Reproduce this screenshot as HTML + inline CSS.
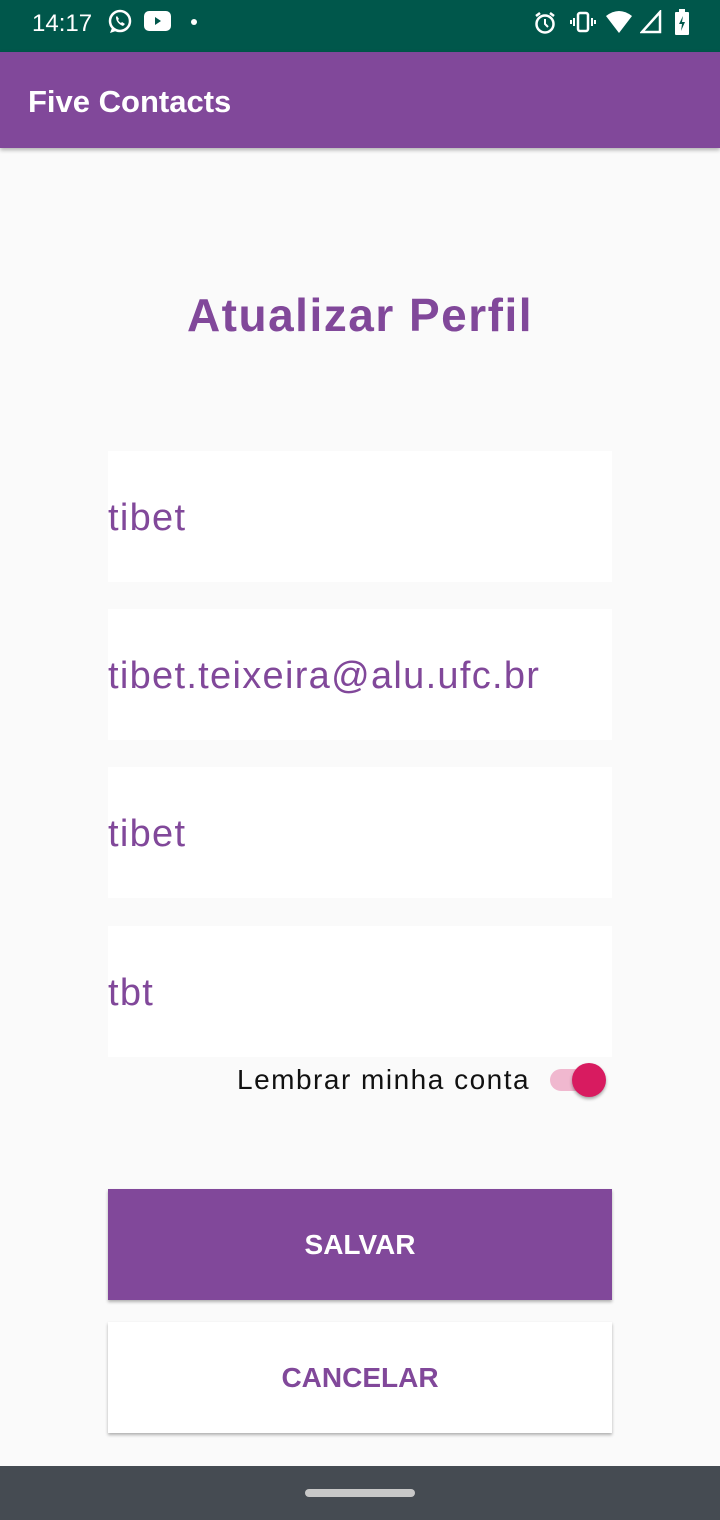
<!DOCTYPE html>
<html><head><meta charset="utf-8"><style>
*{margin:0;padding:0;box-sizing:border-box}
body{width:720px;height:1520px;position:relative;background:#fafafa;font-family:"Liberation Sans",Roboto,sans-serif;overflow:hidden}
.sb{position:absolute;top:0;left:0;width:720px;height:52px;background:#00574b;color:#fff}
.ab{position:absolute;top:52px;left:0;width:720px;height:96px;background:#81489a;box-shadow:0 2px 4px rgba(0,0,0,.3)}
.ab span{position:absolute;left:28px;top:32px;color:#fff;font-size:31px;font-weight:bold}
h1{position:absolute;top:288px;left:0;width:720px;text-align:center;font-size:46px;color:#81489a;letter-spacing:1.5px}
.f{position:absolute;left:108px;width:504px;height:131px;background:#fff;color:#81489a;font-size:38px;padding-top:46px;letter-spacing:1.3px}
.btn{position:absolute;left:108px;width:504px;height:111px;text-align:center;line-height:111px;font-weight:bold;font-size:28px;box-shadow:0 2px 3px rgba(0,0,0,.3)}
.nav{position:absolute;top:1466px;left:0;width:720px;height:54px;background:#454b52}
</style></head><body>
<div class="sb">
<span style="position:absolute;left:32px;top:10px;font-size:24px">14:17</span>
<svg style="position:absolute;left:107px;top:9px" width="26" height="26" viewBox="0 0 26 26"><circle cx="13" cy="12" r="10" fill="none" stroke="#fff" stroke-width="2.5"/><path d="M5 19 L3 24 L9 22Z" fill="#fff"/><path d="M9 8 q0 6 7 9 l2-2 -3-2 -1 1 q-2-1-3-3 l1-1 -2-3z" fill="#fff"/></svg>
<svg style="position:absolute;left:144px;top:11px" width="27" height="20"><rect width="27" height="20" rx="5" fill="#fff"/><path d="M11 6 L17 10 L11 14Z" fill="#00574b"/></svg>
<div style="position:absolute;left:191px;top:19px;width:6px;height:6px;border-radius:3px;background:#fff"></div>
<svg style="position:absolute;left:532px;top:10px" width="26" height="26"><circle cx="13" cy="14" r="8.5" fill="none" stroke="#fff" stroke-width="2.5"/><path d="M13 9v5l3 3" stroke="#fff" stroke-width="2" fill="none"/><path d="M4 6l4-3M22 6l-4-3" stroke="#fff" stroke-width="2.5"/></svg>
<svg style="position:absolute;left:570px;top:10px" width="26" height="24"><rect x="8" y="3" width="10" height="18" rx="2" fill="none" stroke="#fff" stroke-width="2.5"/><path d="M4 8v8M1 10v4M22 8v8M25 10v4" stroke="#fff" stroke-width="2"/></svg>
<svg style="position:absolute;left:605px;top:10px" width="28" height="24"><path d="M1 6 Q14 -4 27 6 L14 23Z" fill="#fff"/></svg>
<svg style="position:absolute;left:640px;top:10px" width="22" height="24"><path d="M20 2 V22 H2Z" fill="none" stroke="#fff" stroke-width="2.5"/></svg>
<svg style="position:absolute;left:675px;top:9px" width="14" height="26"><rect x="0" y="3" width="14" height="23" rx="1" fill="#fff"/><rect x="4" y="0" width="6" height="4" fill="#fff"/><path d="M8 7 L4 15 H7 L6 22 L10 13 H7Z" fill="#00574b"/></svg>
</div>
<div class="ab"><span>Five Contacts</span></div>
<h1>Atualizar Perfil</h1>
<div class="f" style="top:451px">tibet</div>
<div class="f" style="top:609px">tibet.teixeira@alu.ufc.br</div>
<div class="f" style="top:767px">tibet</div>
<div class="f" style="top:926px">tbt</div>
<div style="position:absolute;left:237px;top:1064px;font-size:28px;color:#111;letter-spacing:1.5px">Lembrar minha conta</div>
<div style="position:absolute;left:550px;top:1069px;width:52px;height:22px;border-radius:11px;background:#f0b8cf"></div>
<div style="position:absolute;left:572px;top:1063px;width:34px;height:34px;border-radius:17px;background:#d81b60;box-shadow:0 2px 3px rgba(0,0,0,.35)"></div>
<div class="btn" style="top:1189px;background:#81489a;color:#fff">SALVAR</div>
<div class="btn" style="top:1322px;background:#fff;color:#81489a">CANCELAR</div>
<div class="nav"><div style="position:absolute;left:305px;top:23px;width:110px;height:8px;border-radius:4px;background:#c8c8c8"></div></div>
</body></html>
